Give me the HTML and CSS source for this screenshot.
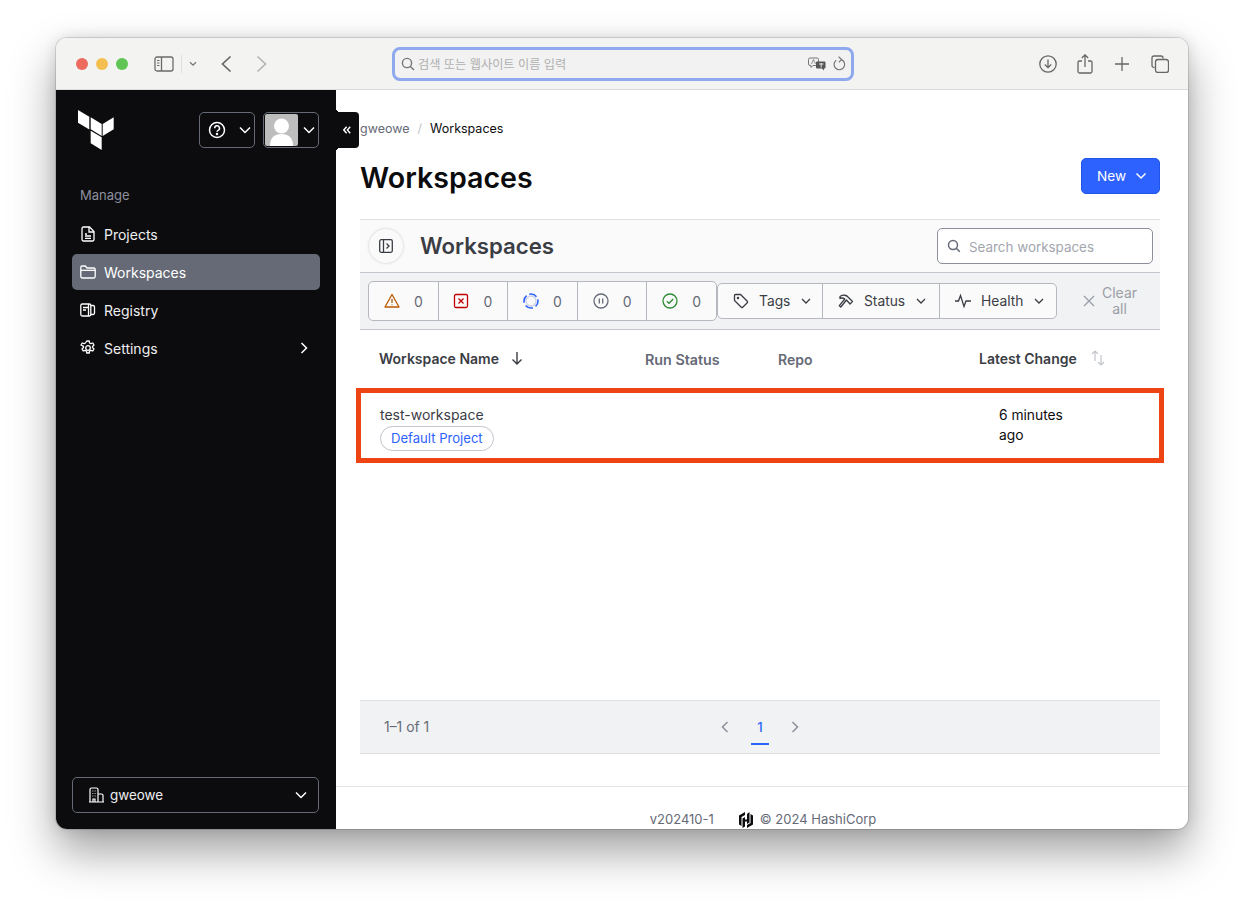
FILE: index.html
```html
<!DOCTYPE html>
<html lang="en">
<head>
  <meta charset="utf-8">
  <title>Workspaces</title>
  <link rel="stylesheet" href="styles.css">
</head>
<body>
<div class="window">

  <header class="toolbar">
    <div class="lights">
      <span class="light red"></span><span class="light yellow"></span><span class="light green"></span>
    </div>
    <svg class="tb-sidebar" width="20" height="16" viewBox="0 0 20 16" fill="none" stroke="#6b6b6b" stroke-width="1.3"><rect x="1" y="1" width="18" height="14" rx="2"/><path d="M7.5 1v14"/><path d="M3 4.500h2.500M3 7h2.500M3 9.500h2.500" stroke-width="1"/></svg>
    <span class="tb-divider"></span>
    <svg class="tb-caret" width="8" height="6" viewBox="0 0 8 6" fill="none" stroke="#777" stroke-width="1.3"><path d="M1 1.200l3 3 3-3"/></svg>
    <svg class="tb-back" width="12" height="18" viewBox="0 0 12 18" fill="none" stroke="#666" stroke-width="1.7"><path d="M10.500 1.500L2.500 9l8 7.500"/></svg>
    <svg class="tb-forward" width="12" height="18" viewBox="0 0 12 18" fill="none" stroke="#b5b5b5" stroke-width="1.7"><path d="M1.500 1.500l8 7.500-8 7.500"/></svg>

    <div class="address">
      <svg width="14" height="14" viewBox="0 0 14 14" fill="none" stroke="#777" stroke-width="1.4"><circle cx="6" cy="6" r="4.600"/><path d="M9.400 9.400L13 13"/></svg>
      <span class="address-text">검색 또는 웹사이트 이름 입력</span>
      <svg class="translate" width="18" height="14" viewBox="0 0 18 14"><path d="M2 1h7a1.500 1.500 0 0 1 1.500 1.500V7A1.500 1.500 0 0 1 9 8.500H5L3 10.500V8.500H2A1.500 1.500 0 0 1 .5 7V2.500A1.500 1.500 0 0 1 2 1z" fill="#f2f2f2" stroke="#777"/><path d="M3.500 7L5.500 2.500 7.500 7" fill="none" stroke="#777" stroke-width=".8"/><path d="M9 4.500h7.500a1 1 0 0 1 1 1v5a1 1 0 0 1-1 1H16v2l-2-2H9a1 1 0 0 1-1-1v-5a1 1 0 0 1 1-1z" fill="#555"/><path d="M11 7h4.500M13.200 6v4.500" stroke="#f2f2f2" stroke-width=".9"/></svg>
      <svg width="13" height="16" viewBox="0 0 13 16" fill="none" stroke="#777" stroke-width="1.200"><path d="M8.500 3.600A5.300 5.300 0 1 1 3.200 4.200"/><path d="M5.600 .8L8.600 3.500 5.800 6.300"/></svg>
    </div>

    <div class="tb-right">
      <svg class="tb-download" width="18" height="18" viewBox="0 0 18 18" fill="none" stroke="#666" stroke-width="1.300"><circle cx="9" cy="9" r="8.200"/><path d="M9 4.500v8M5.800 9.500L9 12.700l3.200-3.200"/></svg>
      <svg width="16" height="20" viewBox="0 0 16 20" fill="none" stroke="#666" stroke-width="1.300"><path d="M5 7H2.500A1.500 1.500 0 0 0 1 8.500v9A1.500 1.500 0 0 0 2.500 19h11a1.500 1.500 0 0 0 1.500-1.500v-9A1.500 1.500 0 0 0 13.500 7H11"/><path d="M8 13V1M4.800 4L8 .9 11.200 4"/></svg>
      <svg width="14" height="14" viewBox="0 0 14 14" fill="none" stroke="#666" stroke-width="1.300"><path d="M7 0v14M0 7h14"/></svg>
      <svg width="18" height="18" viewBox="0 0 18 18" fill="none" stroke="#666" stroke-width="1.300"><path d="M3.500 12.500H3A2 2 0 0 1 1 10.500V3a2 2 0 0 1 2-2h7a2 2 0 0 1 2 2v.500"/><rect x="4.500" y="4.500" width="13" height="13" rx="2.500"/></svg>
    </div>
  </header>

  <div class="app">
    <aside class="sidebar">
      <div class="side-top">
        <svg class="tf-logo" width="36" height="42" viewBox="0 0 36 42" fill="#fff"><path d="M0 1l11.300 6.800v12.700L0 13.700z"/><path d="M12.700 8.300l11 6.700v12l-11-6.700z"/><path d="M24.700 15l11-6.700v12l-11 6.700z"/><path d="M12.700 21.700l11 6.600V41l-11-6.700z"/></svg>
        <button class="side-btn help">
          <svg width="18" height="18" viewBox="0 0 18 18" fill="none" stroke="#fff" stroke-width="1.500"><circle cx="9" cy="9" r="7.500"/><path d="M6.700 7.200a2.400 2.400 0 1 1 3.500 2.100c-.8.400-1.200.9-1.200 1.500"/><circle cx="9" cy="13" r=".5" fill="#fff"/></svg>
          <svg class="chev" width="12" height="8" viewBox="0 0 12 8" fill="none" stroke="#fff" stroke-width="1.500"><path d="M1 1.500l5 5 5-5"/></svg>
        </button>
        <button class="side-btn user">
          <span class="avatar"><svg width="33" height="32" viewBox="0 0 33 32" fill="#fff"><circle cx="16.500" cy="12" r="7.500"/><path d="M5 32c0-8 4-12 11.500-12S28 24 28 32z"/></svg></span>
          <svg class="chev" width="12" height="8" viewBox="0 0 12 8" fill="none" stroke="#fff" stroke-width="1.500"><path d="M1 1.500l5 5 5-5"/></svg>
        </button>
      </div>

      <div class="side-label">Manage</div>
      <nav class="side-nav">
        <a class="side-item">
          <svg width="16" height="16" viewBox="0 0 16 16" fill="none" stroke="#fff" stroke-width="1.300"><path d="M2 2.500A1.500 1.500 0 0 1 3.500 1h6L14 5.500v8a1.500 1.500 0 0 1-1.500 1.500h-9A1.500 1.500 0 0 1 2 13.500z"/><path d="M9 1v5h5M5 8h2M5 10h6M5 12.300h6"/></svg>
          Projects
        </a>
        <a class="side-item active">
          <svg width="16" height="16" viewBox="0 0 16 16" fill="none" stroke="#fff" stroke-width="1.300"><path d="M.8 4V3.500A1.500 1.500 0 0 1 2.300 2h3l1.700 2h6.700a1.500 1.500 0 0 1 1.500 1.500v7a1.500 1.500 0 0 1-1.500 1.500H2.300a1.500 1.500 0 0 1-1.500-1.500z"/><path d="M.8 6.300h14.400"/></svg>
          Workspaces
        </a>
        <a class="side-item">
          <svg width="16" height="16" viewBox="0 0 16 16" fill="none" stroke="#fff" stroke-width="1.300"><rect x=".8" y="2" width="10" height="12" rx="1.500"/><path d="M3 5.500h5.500M3 8h3M11 3.500h2a1.500 1.500 0 0 1 1.500 1.500v6a1.500 1.500 0 0 1-1.500 1.500h-2M8.500 2v12"/></svg>
          Registry
        </a>
        <a class="side-item">
          <svg width="16" height="16" viewBox="0 0 16 16" fill="none" stroke="#fff" stroke-width="1.300" stroke-linejoin="round"><circle cx="8" cy="8" r="2.300"/><path d="M6.800 1h2.400l.4 2 1.300.7 1.900-.7 1.200 2-1.500 1.400v1.200l1.500 1.400-1.200 2-1.900-.7-1.300.7-.4 2H6.800l-.4-2-1.300-.7-1.900.7-1.200-2 1.500-1.400V6.400L1 5l1.200-2 1.900.7 1.300-.7z"/></svg>
          Settings
          <svg class="side-more" width="8" height="12" viewBox="0 0 8 12" fill="none" stroke="#fff" stroke-width="1.500"><path d="M1.500 1l5 5-5 5"/></svg>
        </a>
      </nav>

      <button class="org">
        <svg width="15" height="16" viewBox="0 0 15 16" fill="none" stroke="#fff" stroke-width="1.200"><path d="M1 15V2.500A1.500 1.500 0 0 1 2.500 1h5A1.500 1.500 0 0 1 9 2.500V15M0 15h15M9 7h3.500A1.500 1.500 0 0 1 14 8.500V15M3.500 4h.8M5.700 4h.8M3.500 6.500h.8M5.700 6.500h.8M3.500 9h.8M5.700 9h.8M4 15v-3h2v3"/></svg>
        <span>gweowe</span>
        <svg class="org-chev" width="12" height="8" viewBox="0 0 12 8" fill="none" stroke="#fff" stroke-width="1.500"><path d="M1 1.500l5 5 5-5"/></svg>
      </button>

      <button class="collapse">
        <svg width="8" height="8" viewBox="0 0 10 10" fill="none" stroke="#fff" stroke-width="1.800"><path d="M4.500 1L1 5l3.500 4M9 1L5.500 5 9 9"/></svg>
      </button>
    </aside>

    <main class="main">
      <div class="content">
        <div class="crumbs"><span class="crumb-link">gweowe</span><span class="crumb-sep">/</span><span class="crumb-now">Workspaces</span></div>
        <div class="title-row">
          <h1>Workspaces</h1>
          <button class="new-btn">New
            <svg width="12" height="8" viewBox="0 0 12 8" fill="none" stroke="#fff" stroke-width="1.500"><path d="M1.500 1.500L6 6l4.500-4.500"/></svg>
          </button>
        </div>

        <section class="panel-head">
          <span class="round-btn">
            <svg width="14" height="14" viewBox="0 0 14 14" fill="none" stroke="#3b3d45" stroke-width="1.300"><rect x=".7" y=".7" width="12.600" height="12.600" rx="1.500"/><path d="M4.500 1v12M7.500 4.500L10 7l-2.500 2.500"/></svg>
          </span>
          <h2>Workspaces</h2>
          <label class="search">
            <svg width="14" height="14" viewBox="0 0 14 14" fill="none" stroke="#656a76" stroke-width="1.500"><circle cx="6" cy="6" r="4.500"/><path d="M9.300 9.300L12.800 12.800"/></svg>
            <span>Search workspaces</span>
          </label>
        </section>

        <section class="filters">
          <div class="counts">
            <span class="count">
              <svg width="16" height="16" viewBox="0 0 16 16" fill="none" stroke="#bb5a00" stroke-width="1.300"><path d="M8 1.500L15 14H1z" stroke-linejoin="round"/><path d="M8 6v4M8 11.500v.8"/></svg>0
            </span>
            <span class="count">
              <svg width="16" height="16" viewBox="0 0 16 16" fill="none" stroke="#c00005" stroke-width="1.300"><rect x="1.500" y="1.500" width="13" height="13" rx="1.500"/><path d="M5.500 5.500l5 5M10.500 5.500l-5 5"/></svg>0
            </span>
            <span class="count">
              <svg width="16" height="16" viewBox="0 0 16 16" fill="none"><circle cx="8" cy="8" r="5" stroke="#ccd3e4" stroke-width="1.300"/><circle cx="8" cy="8" r="7" stroke="#2e62ff" stroke-width="1.600" stroke-dasharray="8 3" stroke-dashoffset="2"/></svg>0
            </span>
            <span class="count">
              <svg width="16" height="16" viewBox="0 0 16 16" fill="none" stroke="#656a76" stroke-width="1.300"><circle cx="8" cy="8" r="7"/><path d="M6.300 5.500v5M9.700 5.500v5"/></svg>0
            </span>
            <span class="count">
              <svg width="16" height="16" viewBox="0 0 16 16" fill="none" stroke="#2e8b34" stroke-width="1.300"><circle cx="8" cy="8" r="7"/><path d="M4.800 8.300l2.200 2 4.200-4.300"/></svg>0
            </span>
          </div>
          <div class="drops">
            <button class="drop drop-tags">
              <svg width="16" height="16" viewBox="0 0 16 16" fill="none" stroke="#3b3d45" stroke-width="1.300"><path d="M1.500 2.500a1 1 0 0 1 1-1h5l6.800 6.800a1 1 0 0 1 0 1.400l-4.600 4.600a1 1 0 0 1-1.400 0L1.500 7.500z"/><circle cx="5" cy="5" r=".6"/></svg>
              Tags
              <svg class="drop-chev" width="10" height="6" viewBox="0 0 10 6" fill="none" stroke="#3b3d45" stroke-width="1.300"><path d="M1 1l4 4 4-4"/></svg>
            </button>
            <button class="drop drop-status">
              <svg width="16" height="16" viewBox="0 0 16 16" fill="none" stroke="#3b3d45" stroke-width="1.300"><path d="M2 3.500C5 1.500 8.500 2 10 4l4.500 4.500-2.500 2.500L8.500 7 2.800 14 1.300 12.700l5.500-6.700C5.500 5 4 4.500 2 5.500z" stroke-linejoin="round"/></svg>
              Status
              <svg class="drop-chev" width="10" height="6" viewBox="0 0 10 6" fill="none" stroke="#3b3d45" stroke-width="1.300"><path d="M1 1l4 4 4-4"/></svg>
            </button>
            <button class="drop drop-health">
              <svg width="16" height="16" viewBox="0 0 16 16" fill="none" stroke="#3b3d45" stroke-width="1.300"><path d="M0 8h3.500l2-5.500L9 13.500l2-5.500h5"/></svg>
              Health
              <svg class="drop-chev" width="10" height="6" viewBox="0 0 10 6" fill="none" stroke="#3b3d45" stroke-width="1.300"><path d="M1 1l4 4 4-4"/></svg>
            </button>
          </div>
          <button class="clear">
            <svg width="12" height="12" viewBox="0 0 12 12" fill="none" stroke="#9a9ea8" stroke-width="1.300"><path d="M1 1l10 10M11 1L1 11"/></svg>
            <span>Clear all</span>
          </button>
        </section>

        <div class="list-head">
          <span class="col-name th-strong">Workspace Name
            <svg width="12" height="14" viewBox="0 0 12 14" fill="none" stroke="#3b3d45" stroke-width="1.400"><path d="M6 1v12M1.500 8.500L6 13l4.500-4.500"/></svg>
          </span>
          <span class="col-run">Run Status</span>
          <span class="col-repo">Repo</span>
          <span class="col-change th-strong">Latest Change
            <svg width="16" height="16" viewBox="0 0 16 16" fill="none" stroke="#c2c5cb" stroke-width="1.200"><path d="M5 11V1M2 4l3-3 3 3M11 5v10M8 12l3 3 3-3"/></svg>
          </span>
        </div>

        <div class="row">
          <div class="row-name">
            <div class="ws-name">test-workspace</div>
            <span class="pill">Default Project</span>
          </div>
          <div class="row-change">6 minutes<br>ago</div>
        </div>

        <div class="pager">
          <span class="pager-count">1–1 of 1</span>
          <div class="pager-nav">
            <svg width="8" height="12" viewBox="0 0 8 12" fill="none" stroke="#8c909c" stroke-width="1.500"><path d="M6.500 1l-5 5 5 5"/></svg>
            <span class="page-num">1</span>
            <svg width="8" height="12" viewBox="0 0 8 12" fill="none" stroke="#8c909c" stroke-width="1.500"><path d="M1.500 1l5 5-5 5"/></svg>
          </div>
        </div>
      </div>

      <footer class="foot">
        <span class="foot-ver">v202410-1</span>
        <svg class="hc" width="14" height="16" viewBox="0 0 14 16" fill="#0c0c0e"><path d="M6 0L0 3.500v9L2.500 14V5L6 3zM8 2v5.500H6V5L3.500 6.500V16L6 14.500V9.500h2V12l2.500-1.500V0zM11.500 2v9L8 13v3l6-3.500v-9z"/></svg>
        <span>© 2024 HashiCorp</span>
      </footer>
    </main>
  </div>
</div>
</body>
</html>
```

FILE: styles.css
```css
* {
  box-sizing: border-box;
}

html, body {
  margin: 0;
  height: 903px;
  overflow: hidden;
  background: #fff;
}

body {
  padding: 38px 56px 0;
  font-family: Inter, "Noto Sans CJK KR", sans-serif;
  font-size: 14px;
  color: #0c0c0e;
}

button {
  font: inherit;
  padding: 0;
  cursor: pointer;
}

.window {
  height: 791px;
  border-radius: 11px;
  overflow: hidden;
  display: flex;
  flex-direction: column;
  background: #fff;
  box-shadow: 0 0 0 1px rgba(0,0,0,.12), 0 22px 45px rgba(0,0,0,.38), 0 0 14px rgba(0,0,0,.12);
}

/* browser toolbar */
.toolbar {
  height: 52px;
  flex: none;
  display: flex;
  align-items: center;
  padding-top: 1px;
  background: #f3f3f2;
  border-bottom: 1px solid #dcdcdc;
}
.lights {
  display: flex;
  gap: 8px;
  margin-left: 20px;
}
.light {
  width: 12px;
  height: 12px;
  border-radius: 50%;
}
.red { background: #ec6a5e; }
.yellow { background: #f4bf4f; }
.green { background: #61c554; }

.tb-sidebar { margin-left: 26px; }
.tb-divider {
  width: 1px;
  height: 18px;
  background: #e0e0e0;
  margin-left: 7px;
}
.tb-caret { margin-left: 7px; }
.tb-back { margin-left: 23px; }
.tb-forward { margin-left: 24px; }

.address {
  width: 462px;
  height: 34px;
  margin-left: 124px;
  display: flex;
  align-items: center;
  gap: 3px;
  padding: 0 5px 0 6px;
  background: #f2f2f2;
  border: 3px solid #8fa9ef;
  border-radius: 8px;
}
.address-text {
  flex: 1;
  font-size: 12.2px;
  color: #b0b0b0;
}
.translate { margin-right: 4px; }

.tb-right {
  margin-left: auto;
  margin-right: 19px;
  display: flex;
  align-items: center;
  gap: 22px;
}
.tb-download { margin-right: -2px; }

/* app */
.app {
  flex: 1;
  min-height: 0;
  display: flex;
}

.sidebar {
  position: relative;
  width: 280px;
  flex: none;
  display: flex;
  flex-direction: column;
  padding: 0 16px 16px;
  background: #0c0c0e;
  color: #fff;
}
.side-top {
  display: flex;
  align-items: flex-start;
  padding-top: 19px;
  padding-left: 6px;
}
.tf-logo { margin-right: 85px; }
.side-btn {
  height: 36px;
  margin-top: 3px;
  display: flex;
  align-items: center;
  background: transparent;
  border: 1px solid #656a76;
  border-radius: 5px;
}
.help {
  width: 56px;
  padding-left: 8px;
  margin-right: 8px;
}
.user {
  width: 56px;
  padding-left: 1px;
}
.chev { margin-left: auto; margin-right: 3px; }
.avatar {
  width: 33px;
  height: 32px;
  display: block;
  background: #bdbdbd;
  border-radius: 2px;
  overflow: hidden;
}
.avatar svg { display: block; }

.side-label {
  margin-top: 35px;
  margin-left: 8px;
  font-size: 13px;
  line-height: 18px;
  color: #8c909c;
}
.side-nav {
  margin-top: 12px;
  display: flex;
  flex-direction: column;
  gap: 2px;
}
.side-item {
  height: 36px;
  display: flex;
  align-items: center;
  gap: 8px;
  padding: 0 8px;
  border-radius: 5px;
  color: #efeff1;
}
.side-item.active {
  background: #656a76;
  color: #fff;
}
.side-more { margin-left: auto; margin-right: 4px; }

.org {
  margin-top: auto;
  height: 36px;
  width: 247px;
  display: flex;
  align-items: center;
  gap: 6px;
  padding: 0 11px 1px 16px;
  font-size: 13.4px;
  background: transparent;
  border: 1px solid #656a76;
  border-radius: 5px;
  color: #efeff1;
}
.org-chev { margin-left: auto; }

.collapse {
  position: absolute;
  left: 279px;
  top: 22px;
  width: 24px;
  height: 36px;
  display: flex;
  align-items: center;
  justify-content: center;
  background: #0c0c0e;
  border: 0;
  border-radius: 0 4px 4px 0;
}
.collapse::before,
.collapse::after {
  content: "";
  position: absolute;
  left: 1px;
  width: 4px;
  height: 4px;
}
.collapse::before {
  top: -4px;
  background: radial-gradient(circle at 100% 0, transparent 4px, #0c0c0e 4px);
}
.collapse::after {
  bottom: -4px;
  background: radial-gradient(circle at 100% 100%, transparent 4px, #0c0c0e 4px);
}

/* main column */
.main {
  flex: 1;
  min-width: 0;
  display: flex;
  flex-direction: column;
}
.content {
  flex: 1;
  padding: 0 28px 0 24px;
}

.crumbs {
  height: 17px;
  margin-top: 30px;
  display: flex;
  align-items: center;
  gap: 8px;
  font-size: 12.5px;
}
.crumb-link { color: #656a76; }
.crumb-sep { color: #c2c5cb; }

.title-row {
  height: 36px;
  margin-top: 21px;
  display: flex;
  align-items: center;
  justify-content: space-between;
}
h1 {
  margin: 0;
  padding-top: 2px;
  font-size: 28.6px;
  font-weight: 600;
}
.new-btn {
  width: 79px;
  height: 36px;
  display: flex;
  align-items: center;
  gap: 9px;
  padding: 0 0 1px 15px;
  font-size: 13.6px;
  background: #2e62ff;
  border: 1px solid #2154e8;
  border-radius: 5px;
  color: #fff;
}

.panel-head {
  height: 54px;
  margin-top: 25px;
  display: flex;
  align-items: center;
  padding: 0 7px 0 9px;
  background: #fafafa;
  border-top: 1px solid #dedfe3;
  border-bottom: 1px solid #c2c5cb;
}
.round-btn {
  width: 34px;
  height: 34px;
  display: flex;
  align-items: center;
  justify-content: center;
  background: #fafafa;
  border-radius: 50%;
  box-shadow: 0 0 3px rgba(0,0,0,.2);
}
h2 {
  margin: 0 0 2px 17px;
  font-size: 22.2px;
  font-weight: 600;
  color: #3b3d45;
}
.search {
  margin-left: auto;
  width: 216px;
  height: 36px;
  display: flex;
  align-items: center;
  gap: 8px;
  padding: 0 9px;
  font-size: 13.4px;
  background: #fff;
  border: 1px solid #8c909c;
  border-radius: 5px;
  color: #a3a6af;
}
.search span { padding-top: 1px; }

.filters {
  height: 57px;
  display: flex;
  align-items: center;
  padding-left: 8px;
  background: #f1f2f3;
  border-bottom: 1px solid #c2c5cb;
}
.counts {
  width: 349px;
  height: 40px;
  display: flex;
  background: #fafafa;
  border: 1px solid #b5b8bf;
  border-radius: 5px;
}
.count {
  flex: 1;
  display: flex;
  align-items: center;
  justify-content: center;
  gap: 14px;
  color: #656a76;
  border-right: 1px solid #b5b8bf;
}
.count:last-child { border-right: 0; }

.drops {
  width: 340px;
  height: 36px;
  display: flex;
  background: #fafafa;
  border: 1px solid #b5b8bf;
  border-radius: 5px;
}
.drop {
  height: 100%;
  display: flex;
  align-items: center;
  gap: 10px;
  padding: 0 0 1px 15px;
  font-size: 13.8px;
  background: transparent;
  border: 0;
  border-right: 1px solid #b5b8bf;
  color: #3b3d45;
}
.drop:last-child { border-right: 0; }
.drop-tags { width: 105px; }
.drop-status { width: 117px; }
.drop-health { width: 116px; }
.drop-chev { margin-left: 1px; }

.clear {
  margin-left: 26px;
  display: flex;
  align-items: center;
  gap: 6px;
  background: transparent;
  border: 0;
  color: #9a9ea8;
}
.clear span {
  width: 37px;
  line-height: 16px;
  text-align: center;
}

.list-head {
  height: 58px;
  display: flex;
  align-items: center;
  font-size: 14px;
  font-weight: 600;
  color: #656a76;
}
.list-head span {
  display: flex;
  align-items: center;
}
.th-strong { color: #3b3d45; padding-bottom: 2px; }
.col-name {
  width: 285px;
  padding-left: 19px;
  gap: 12px;
}
.col-run { width: 133px; font-size: 14.3px; }
.col-repo { width: 201px; }
.col-change { gap: 13px; }

.row {
  height: 75px;
  margin: 0 -4px;
  display: flex;
  border: 5px solid #ee4312;
  padding-left: 19px;
}
.row-name {
  width: 619px;
  padding-top: 12px;
}
.ws-name {
  line-height: 20px;
  color: #3b3d45;
}
.pill {
  display: inline-block;
  height: 25px;
  margin-top: 1px;
  padding: 0 10px;
  line-height: 22px;
  font-size: 13.1px;
  color: #2e62ff;
  background: #fff;
  border: 1px solid #c2c5cb;
  border-radius: 13px;
}
.row-change {
  padding-top: 12px;
  line-height: 20px;
  font-size: 13.8px;
}

.pager {
  position: relative;
  height: 54px;
  margin-top: 237px;
  display: flex;
  align-items: center;
  padding-left: 24px;
  background: #f1f2f3;
  border-top: 1px solid #dedfe3;
  border-bottom: 1px solid #dedfe3;
  font-size: 13.9px;
  color: #656a76;
}
.pager-nav {
  position: absolute;
  left: 361px;
  top: 0;
  height: 100%;
  display: flex;
  align-items: center;
  gap: 22px;
}
.page-num {
  width: 18px;
  height: 100%;
  display: flex;
  align-items: center;
  justify-content: center;
  font-size: 13px;
  color: #2e62ff;
  font-weight: 500;
  background: linear-gradient(#2e62ff, #2e62ff) no-repeat 0 42px / 100% 2px;
}

.foot {
  height: 43px;
  flex: none;
  display: flex;
  align-items: flex-start;
  justify-content: center;
  padding: 24px 0 0 2px;
  border-top: 1px solid #e4e5e8;
  font-size: 13px;
  color: #656a76;
}
.foot-ver { margin-right: 25px; }
.hc { margin-right: 7px; margin-top: 1px; }
```
